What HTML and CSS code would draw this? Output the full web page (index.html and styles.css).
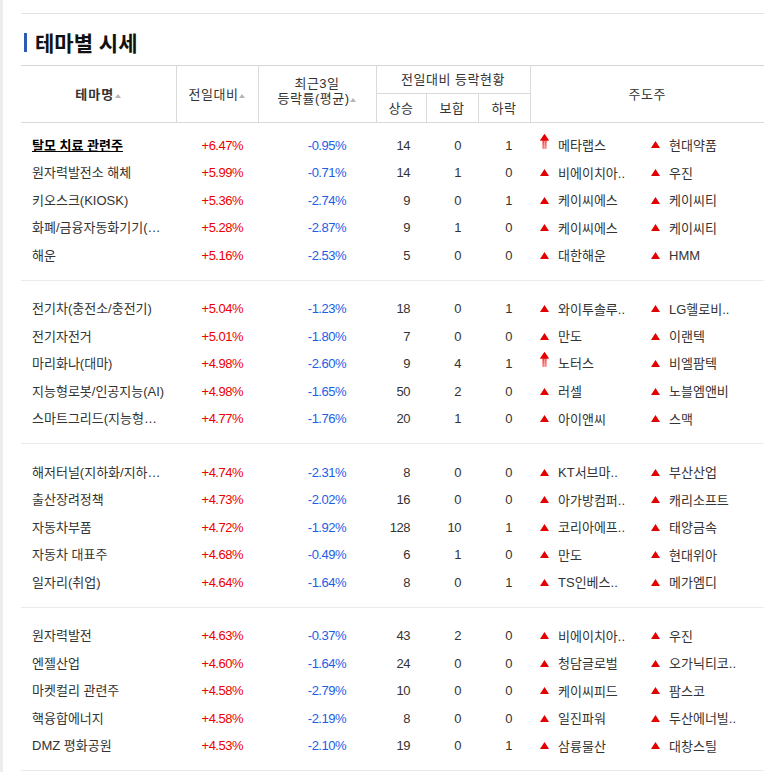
FILE: index.html
```html
<!DOCTYPE html>
<html lang="ko">
<head>
<meta charset="utf-8">
<title>테마별 시세</title>
<link rel="stylesheet" href="styles.css">
</head>
<body>
<div class="page">
  <div class="wrap">
    <h2 class="title"><span class="bar"></span>테마별 시세</h2>
    <table class="theme">
      <colgroup>
        <col class="c-name"><col class="c-rate"><col class="c-rate3"><col class="c-up"><col class="c-same"><col class="c-down"><col class="c-lead">
      </colgroup>
      <thead>
        <tr class="h1">
          <th rowspan="2" class="h-name">테마명<i class="sort"></i></th>
          <th rowspan="2" class="h-rate">전일대비<i class="sort"></i></th>
          <th rowspan="2" class="h-rate3">최근3일<br>등락률(평균)<i class="sort"></i></th>
          <th colspan="3" class="h-stat">전일대비 등락현황</th>
          <th rowspan="2" class="h-lead">주도주</th>
        </tr>
        <tr class="h2">
          <th>상승</th><th>보합</th><th>하락</th>
        </tr>
      </thead>
      <tbody class="grp first">
        <tr class="pt"><td colspan="7"></td></tr>
        <tr>
          <td class="name"><a class="nm active">탈모 치료 관련주</a></td>
          <td class="rate red">+6.47%</td><td class="rate3 blue">-0.95%</td>
          <td class="up">14</td><td class="same">0</td><td class="down">1</td>
          <td class="lead"><span class="stock"><svg class="ico arrow" width="9" height="15" viewBox="0 0 9 15"><defs><linearGradient id="ga1" x1="0" y1="0" x2="0" y2="1"><stop offset="0" stop-color="#e80000"/><stop offset="1" stop-color="#ff8a8a"/></linearGradient></defs><path d="M4.5 0L9 6.5H6.6V15H2.4V6.5H0Z" fill="url(#ga1)"/><path d="M4.5 0L9 6.5H0Z" fill="#e80000"/><rect x="4" y="7" width="1.2" height="8" fill="#ffd0d0" opacity=".6"/></svg><span class="sn">메타랩스</span></span><span class="stock"><svg class="ico tri" width="9" height="7" viewBox="0 0 9 7"><path d="M4.5 0L9 7H0Z"/></svg><span class="sn">현대약품</span></span></td>
        </tr>
        <tr>
          <td class="name"><a class="nm">원자력발전소 해체</a></td>
          <td class="rate red">+5.99%</td><td class="rate3 blue">-0.71%</td>
          <td class="up">14</td><td class="same">1</td><td class="down">0</td>
          <td class="lead"><span class="stock"><svg class="ico tri" width="9" height="7" viewBox="0 0 9 7"><path d="M4.5 0L9 7H0Z"/></svg><span class="sn">비에이치아..</span></span><span class="stock"><svg class="ico tri" width="9" height="7" viewBox="0 0 9 7"><path d="M4.5 0L9 7H0Z"/></svg><span class="sn">우진</span></span></td>
        </tr>
        <tr>
          <td class="name"><a class="nm">키오스크(KIOSK)</a></td>
          <td class="rate red">+5.36%</td><td class="rate3 blue">-2.74%</td>
          <td class="up">9</td><td class="same">0</td><td class="down">1</td>
          <td class="lead"><span class="stock"><svg class="ico tri" width="9" height="7" viewBox="0 0 9 7"><path d="M4.5 0L9 7H0Z"/></svg><span class="sn">케이씨에스</span></span><span class="stock"><svg class="ico tri" width="9" height="7" viewBox="0 0 9 7"><path d="M4.5 0L9 7H0Z"/></svg><span class="sn">케이씨티</span></span></td>
        </tr>
        <tr>
          <td class="name"><a class="nm">화폐/금융자동화기기(…</a></td>
          <td class="rate red">+5.28%</td><td class="rate3 blue">-2.87%</td>
          <td class="up">9</td><td class="same">1</td><td class="down">0</td>
          <td class="lead"><span class="stock"><svg class="ico tri" width="9" height="7" viewBox="0 0 9 7"><path d="M4.5 0L9 7H0Z"/></svg><span class="sn">케이씨에스</span></span><span class="stock"><svg class="ico tri" width="9" height="7" viewBox="0 0 9 7"><path d="M4.5 0L9 7H0Z"/></svg><span class="sn">케이씨티</span></span></td>
        </tr>
        <tr>
          <td class="name"><a class="nm">해운</a></td>
          <td class="rate red">+5.16%</td><td class="rate3 blue">-2.53%</td>
          <td class="up">5</td><td class="same">0</td><td class="down">0</td>
          <td class="lead"><span class="stock"><svg class="ico tri" width="9" height="7" viewBox="0 0 9 7"><path d="M4.5 0L9 7H0Z"/></svg><span class="sn">대한해운</span></span><span class="stock"><svg class="ico tri" width="9" height="7" viewBox="0 0 9 7"><path d="M4.5 0L9 7H0Z"/></svg><span class="sn">HMM</span></span></td>
        </tr>
        <tr class="pb"><td colspan="7"></td></tr>
      </tbody>
      <tbody class="grp">
        <tr class="pt"><td colspan="7"></td></tr>
        <tr>
          <td class="name"><a class="nm">전기차(충전소/충전기)</a></td>
          <td class="rate red">+5.04%</td><td class="rate3 blue">-1.23%</td>
          <td class="up">18</td><td class="same">0</td><td class="down">1</td>
          <td class="lead"><span class="stock"><svg class="ico tri" width="9" height="7" viewBox="0 0 9 7"><path d="M4.5 0L9 7H0Z"/></svg><span class="sn">와이투솔루..</span></span><span class="stock"><svg class="ico tri" width="9" height="7" viewBox="0 0 9 7"><path d="M4.5 0L9 7H0Z"/></svg><span class="sn">LG헬로비..</span></span></td>
        </tr>
        <tr>
          <td class="name"><a class="nm">전기자전거</a></td>
          <td class="rate red">+5.01%</td><td class="rate3 blue">-1.80%</td>
          <td class="up">7</td><td class="same">0</td><td class="down">0</td>
          <td class="lead"><span class="stock"><svg class="ico tri" width="9" height="7" viewBox="0 0 9 7"><path d="M4.5 0L9 7H0Z"/></svg><span class="sn">만도</span></span><span class="stock"><svg class="ico tri" width="9" height="7" viewBox="0 0 9 7"><path d="M4.5 0L9 7H0Z"/></svg><span class="sn">이랜텍</span></span></td>
        </tr>
        <tr>
          <td class="name"><a class="nm">마리화나(대마)</a></td>
          <td class="rate red">+4.98%</td><td class="rate3 blue">-2.60%</td>
          <td class="up">9</td><td class="same">4</td><td class="down">1</td>
          <td class="lead"><span class="stock"><svg class="ico arrow" width="9" height="15" viewBox="0 0 9 15"><defs><linearGradient id="ga2" x1="0" y1="0" x2="0" y2="1"><stop offset="0" stop-color="#e80000"/><stop offset="1" stop-color="#ff8a8a"/></linearGradient></defs><path d="M4.5 0L9 6.5H6.6V15H2.4V6.5H0Z" fill="url(#ga2)"/><path d="M4.5 0L9 6.5H0Z" fill="#e80000"/><rect x="4" y="7" width="1.2" height="8" fill="#ffd0d0" opacity=".6"/></svg><span class="sn">노터스</span></span><span class="stock"><svg class="ico tri" width="9" height="7" viewBox="0 0 9 7"><path d="M4.5 0L9 7H0Z"/></svg><span class="sn">비엘팜텍</span></span></td>
        </tr>
        <tr>
          <td class="name"><a class="nm">지능형로봇/인공지능(AI)</a></td>
          <td class="rate red">+4.98%</td><td class="rate3 blue">-1.65%</td>
          <td class="up">50</td><td class="same">2</td><td class="down">0</td>
          <td class="lead"><span class="stock"><svg class="ico tri" width="9" height="7" viewBox="0 0 9 7"><path d="M4.5 0L9 7H0Z"/></svg><span class="sn">러셀</span></span><span class="stock"><svg class="ico tri" width="9" height="7" viewBox="0 0 9 7"><path d="M4.5 0L9 7H0Z"/></svg><span class="sn">노블엠앤비</span></span></td>
        </tr>
        <tr>
          <td class="name"><a class="nm">스마트그리드(지능형…</a></td>
          <td class="rate red">+4.77%</td><td class="rate3 blue">-1.76%</td>
          <td class="up">20</td><td class="same">1</td><td class="down">0</td>
          <td class="lead"><span class="stock"><svg class="ico tri" width="9" height="7" viewBox="0 0 9 7"><path d="M4.5 0L9 7H0Z"/></svg><span class="sn">아이앤씨</span></span><span class="stock"><svg class="ico tri" width="9" height="7" viewBox="0 0 9 7"><path d="M4.5 0L9 7H0Z"/></svg><span class="sn">스맥</span></span></td>
        </tr>
        <tr class="pb"><td colspan="7"></td></tr>
      </tbody>
      <tbody class="grp">
        <tr class="pt"><td colspan="7"></td></tr>
        <tr>
          <td class="name"><a class="nm">해저터널(지하화/지하…</a></td>
          <td class="rate red">+4.74%</td><td class="rate3 blue">-2.31%</td>
          <td class="up">8</td><td class="same">0</td><td class="down">0</td>
          <td class="lead"><span class="stock"><svg class="ico tri" width="9" height="7" viewBox="0 0 9 7"><path d="M4.5 0L9 7H0Z"/></svg><span class="sn">KT서브마..</span></span><span class="stock"><svg class="ico tri" width="9" height="7" viewBox="0 0 9 7"><path d="M4.5 0L9 7H0Z"/></svg><span class="sn">부산산업</span></span></td>
        </tr>
        <tr>
          <td class="name"><a class="nm">출산장려정책</a></td>
          <td class="rate red">+4.73%</td><td class="rate3 blue">-2.02%</td>
          <td class="up">16</td><td class="same">0</td><td class="down">0</td>
          <td class="lead"><span class="stock"><svg class="ico tri" width="9" height="7" viewBox="0 0 9 7"><path d="M4.5 0L9 7H0Z"/></svg><span class="sn">아가방컴퍼..</span></span><span class="stock"><svg class="ico tri" width="9" height="7" viewBox="0 0 9 7"><path d="M4.5 0L9 7H0Z"/></svg><span class="sn">캐리소프트</span></span></td>
        </tr>
        <tr>
          <td class="name"><a class="nm">자동차부품</a></td>
          <td class="rate red">+4.72%</td><td class="rate3 blue">-1.92%</td>
          <td class="up">128</td><td class="same">10</td><td class="down">1</td>
          <td class="lead"><span class="stock"><svg class="ico tri" width="9" height="7" viewBox="0 0 9 7"><path d="M4.5 0L9 7H0Z"/></svg><span class="sn">코리아에프..</span></span><span class="stock"><svg class="ico tri" width="9" height="7" viewBox="0 0 9 7"><path d="M4.5 0L9 7H0Z"/></svg><span class="sn">태양금속</span></span></td>
        </tr>
        <tr>
          <td class="name"><a class="nm">자동차 대표주</a></td>
          <td class="rate red">+4.68%</td><td class="rate3 blue">-0.49%</td>
          <td class="up">6</td><td class="same">1</td><td class="down">0</td>
          <td class="lead"><span class="stock"><svg class="ico tri" width="9" height="7" viewBox="0 0 9 7"><path d="M4.5 0L9 7H0Z"/></svg><span class="sn">만도</span></span><span class="stock"><svg class="ico tri" width="9" height="7" viewBox="0 0 9 7"><path d="M4.5 0L9 7H0Z"/></svg><span class="sn">현대위아</span></span></td>
        </tr>
        <tr>
          <td class="name"><a class="nm">일자리(취업)</a></td>
          <td class="rate red">+4.64%</td><td class="rate3 blue">-1.64%</td>
          <td class="up">8</td><td class="same">0</td><td class="down">1</td>
          <td class="lead"><span class="stock"><svg class="ico tri" width="9" height="7" viewBox="0 0 9 7"><path d="M4.5 0L9 7H0Z"/></svg><span class="sn">TS인베스..</span></span><span class="stock"><svg class="ico tri" width="9" height="7" viewBox="0 0 9 7"><path d="M4.5 0L9 7H0Z"/></svg><span class="sn">메가엠디</span></span></td>
        </tr>
        <tr class="pb"><td colspan="7"></td></tr>
      </tbody>
      <tbody class="grp">
        <tr class="pt"><td colspan="7"></td></tr>
        <tr>
          <td class="name"><a class="nm">원자력발전</a></td>
          <td class="rate red">+4.63%</td><td class="rate3 blue">-0.37%</td>
          <td class="up">43</td><td class="same">2</td><td class="down">0</td>
          <td class="lead"><span class="stock"><svg class="ico tri" width="9" height="7" viewBox="0 0 9 7"><path d="M4.5 0L9 7H0Z"/></svg><span class="sn">비에이치아..</span></span><span class="stock"><svg class="ico tri" width="9" height="7" viewBox="0 0 9 7"><path d="M4.5 0L9 7H0Z"/></svg><span class="sn">우진</span></span></td>
        </tr>
        <tr>
          <td class="name"><a class="nm">엔젤산업</a></td>
          <td class="rate red">+4.60%</td><td class="rate3 blue">-1.64%</td>
          <td class="up">24</td><td class="same">0</td><td class="down">0</td>
          <td class="lead"><span class="stock"><svg class="ico tri" width="9" height="7" viewBox="0 0 9 7"><path d="M4.5 0L9 7H0Z"/></svg><span class="sn">청담글로벌</span></span><span class="stock"><svg class="ico tri" width="9" height="7" viewBox="0 0 9 7"><path d="M4.5 0L9 7H0Z"/></svg><span class="sn">오가닉티코..</span></span></td>
        </tr>
        <tr>
          <td class="name"><a class="nm">마켓컬리 관련주</a></td>
          <td class="rate red">+4.58%</td><td class="rate3 blue">-2.79%</td>
          <td class="up">10</td><td class="same">0</td><td class="down">0</td>
          <td class="lead"><span class="stock"><svg class="ico tri" width="9" height="7" viewBox="0 0 9 7"><path d="M4.5 0L9 7H0Z"/></svg><span class="sn">케이씨피드</span></span><span class="stock"><svg class="ico tri" width="9" height="7" viewBox="0 0 9 7"><path d="M4.5 0L9 7H0Z"/></svg><span class="sn">팜스코</span></span></td>
        </tr>
        <tr>
          <td class="name"><a class="nm">핵융합에너지</a></td>
          <td class="rate red">+4.58%</td><td class="rate3 blue">-2.19%</td>
          <td class="up">8</td><td class="same">0</td><td class="down">0</td>
          <td class="lead"><span class="stock"><svg class="ico tri" width="9" height="7" viewBox="0 0 9 7"><path d="M4.5 0L9 7H0Z"/></svg><span class="sn">일진파워</span></span><span class="stock"><svg class="ico tri" width="9" height="7" viewBox="0 0 9 7"><path d="M4.5 0L9 7H0Z"/></svg><span class="sn">두산에너빌..</span></span></td>
        </tr>
        <tr>
          <td class="name"><a class="nm">DMZ 평화공원</a></td>
          <td class="rate red">+4.53%</td><td class="rate3 blue">-2.10%</td>
          <td class="up">19</td><td class="same">0</td><td class="down">1</td>
          <td class="lead"><span class="stock"><svg class="ico tri" width="9" height="7" viewBox="0 0 9 7"><path d="M4.5 0L9 7H0Z"/></svg><span class="sn">삼륭물산</span></span><span class="stock"><svg class="ico tri" width="9" height="7" viewBox="0 0 9 7"><path d="M4.5 0L9 7H0Z"/></svg><span class="sn">대창스틸</span></span></td>
        </tr>
        <tr class="pb"><td colspan="7"></td></tr>
      </tbody>
    </table>
  </div>
</div>
</body>
</html>
```

FILE: styles.css
```css
html, body {
  margin: 0;
  padding: 0;
  background: #fff;
}
body {
  font-family: "Liberation Sans", "Noto Sans CJK KR", "Noto Sans", sans-serif;
  font-size: 13px;
  color: #333;
}
.page {
  border-left: 3px solid #ededed;
  min-height: 772px;
  box-sizing: border-box;
  padding-top: 13px;
}
.wrap {
  margin-left: 18px;
  width: 743px;
  border-top: 1px solid #e3e3e3;
}
.title {
  margin: 0;
  padding: 16px 0 11px 3px;
  display: flex;
  align-items: center;
  font-family: "Noto Sans CJK KR", sans-serif;
  font-size: 21px;
  line-height: 24px;
  font-weight: 700;
  color: #111;
}
.bar {
  width: 3px;
  height: 19px;
  background: #2d5bb4;
  margin-right: 8px;
}
.theme {
  width: 743px;
  border-collapse: collapse;
  table-layout: fixed;
}
.c-name { width: 155px; }
.c-rate { width: 82px; }
.c-rate3 { width: 118px; }
.c-up { width: 50px; }
.c-same { width: 52px; }
.c-down { width: 52px; }
.c-lead { width: 234px; }

.theme th {
  font-weight: normal;
  font-size: 13px;
  line-height: 15px;
  color: #333;
  border: 1px solid #dadada;
  padding: 0;
  letter-spacing: 0.5px;
}
.theme thead tr.h1 th { border-top-color: #d6d6d6; }
.theme thead tr.h1 { height: 28px; }
.theme thead tr.h2 { height: 29px; }
.theme th.h-name { border-left: 0; font-weight: 700; letter-spacing: 1px; }
.theme th.h-lead { border-right: 0; }
.theme th.h-rate3 { padding-bottom: 6px; }
.sort {
  display: inline-block;
  width: 0;
  height: 0;
  border-left: 3px solid transparent;
  border-right: 3px solid transparent;
  border-bottom: 4px solid #b5b5b5;
  margin-left: 1px;
  vertical-align: 1px;
}

.theme td {
  padding: 0;
  height: 27.5px;
  line-height: 18px;
  vertical-align: middle;
  white-space: nowrap;
}
.theme tr.pt td { height: 15px; }
.theme tbody.first tr.pt td { height: 9px; }
.theme tr.pb td { height: 10px; border-bottom: 1px solid #ebebeb; }

.name { padding-left: 11px !important; }
.nm {
  display: block;
  white-space: nowrap;
  color: #333;
  text-decoration: none;
}
.nm.active {
  color: #000;
  font-weight: 700;
  text-decoration: underline;
}
.rate, .rate3, .up, .same, .down {
  letter-spacing: -0.5px;
  text-align: right;
}
.rate { padding-right: 15px !important; }
.rate3 { padding-right: 30px !important; }
.up { padding-right: 16px !important; }
.same { padding-right: 17px !important; }
.down { padding-right: 18px !important; }
.red { color: #ec0000; }
.blue { color: #1d5ee6; }

.lead { padding-left: 10px !important; }
.stock {
  display: inline-flex;
  align-items: center;
  width: 111px;
  vertical-align: middle;
}
.ico { flex: none; margin-right: 9px; }
.ico.tri { margin-bottom: 2px; }
.ico.tri path { fill: #e20000; }
.ico.arrow { margin-bottom: 9px; }
.sn { color: #333; }
```
